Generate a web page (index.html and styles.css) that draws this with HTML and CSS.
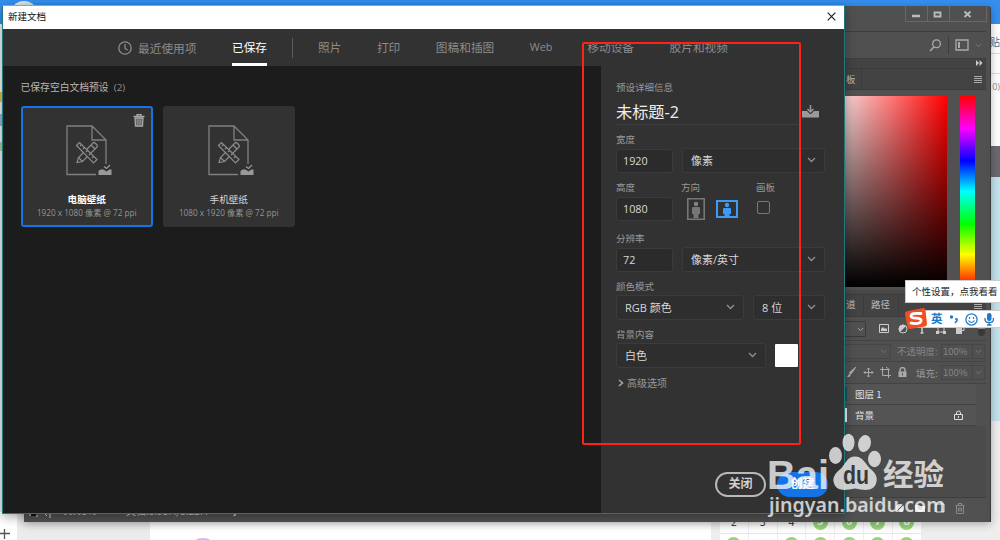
FILE: index.html
```html
<!DOCTYPE html>
<html lang="zh-CN">
<head>
<meta charset="UTF-8">
<meta name="viewport" content="width=device-width, initial-scale=1.0">
<title>新建文档</title>
<link rel="stylesheet" href="styles.css">
</head>
<body>
<div class="desktop">

<!-- Navegador de fondo -->
<div class="browser">
<div class="browser-top"><span class="avatar"></span></div>
<div class="browser-main">
<div class="browser-left"></div>
<div class="browser-right">
<div class="side-link">试贴</div>
<div class="side-line"></div>
<div class="side-count">0)</div>
<div class="side-dark"></div>
<div class="side-blue"></div>
</div>
</div>
<div class="browser-bottom">
<div class="add"><svg width="11" height="11"><path d="M0 5.500h10M4.500 1v10" stroke="#555" stroke-width="1.300"/></svg></div>
<div class="side-gray"></div>
<div class="page-white"><span class="purple"></span></div>
<div class="calendar">
<span>2</span><span>3</span><span>4</span><span><b>5</b></span><span><b>6</b></span><span><b>7</b></span><span><b>8</b></span>
<span><b></b></span><span></span><span><b></b></span><span><b></b></span><span><b></b></span><span><b></b></span><span><b></b></span>
</div>
</div>
</div>

<!-- Ventana del editor -->
<div class="editor">
<div class="status">
<svg class="status-icons" width="24" height="12" viewBox="0 0 24 12"><path d="M2 5h5v4H2z" fill="#111"/><path d="M1 9V4h6M7 9h2M16 6h5v5M18 3l-3 3 3 3" fill="none" stroke="#ddd"/></svg>
<span class="zoom-level">66.68%</span>
<span class="doc-size">文档:5.93M/5.22M</span>
<span class="status-arrow">&#10095;</span>
</div>
<div class="panels">
<div class="window-bar">
<div class="window-buttons">
<span><svg width="10" height="10"><path d="M1 6h8" stroke="#bbb" stroke-width="2.500"/></svg></span>
<span><svg width="10" height="10"><path d="M1.500 2.500h6v4h-6z" fill="none" stroke="#bbb" stroke-width="1.800"/></svg></span>
<span class="wide"><svg width="10" height="10"><path d="M1.500 1.500l6 5.500M7.500 1.500l-6 5.500" stroke="#bbb" stroke-width="1.800"/></svg></span>
</div>
</div>
<div class="options-bar">
<svg width="12" height="13" viewBox="0 0 12 13"><circle cx="7.500" cy="4.800" r="3.900" fill="none" stroke="#aaa" stroke-width="1.300"/><path d="M5 8L1 12" stroke="#aaa" stroke-width="1.600"/></svg>
<i></i>
<svg width="14" height="12" viewBox="0 0 14 12"><path d="M1 1h12v10H1z" fill="none" stroke="#aaa" stroke-width="1.300"/><path d="M3 3h2v6H3z" fill="#aaa"/></svg>
<svg class="down" width="7" height="5" viewBox="0 0 7 5"><path d="M.8 1l2.700 2.700L6.200 1" fill="none" stroke="#777"/></svg>
</div>
<div class="collapse"><svg width="7" height="6"><path d="M0 0l3 3-3 3zM3.500 0l3 3-3 3z" fill="#ccc"/></svg></div>
<div class="tabs-bar">
<span class="tab first">板</span>
<svg width="9" height="7"><path d="M0 .5h8M0 2.500h8M0 4.500h8M0 6.500h8" stroke="#aaa"/></svg>
</div>
<div class="color-panel">
<div class="color-field"></div>
<div class="hue"></div>
</div>
<div class="tabs-bar layers-tabs">
<span class="tab cut">道</span>
<span class="tab on">路径</span>
<svg width="9" height="7"><path d="M0 .5h8M0 2.500h8M0 4.500h8M0 6.500h8" stroke="#aaa"/></svg>
</div>
<div class="filter-row">
<span class="filter-select"><svg width="7" height="5" viewBox="0 0 7 5"><path d="M.8 1l2.700 2.700L6.200 1" fill="none" stroke="#aaa"/></svg></span>
<svg width="10" height="9"><path d="M.5.5h9v8h-9z" fill="none" stroke="#ccc"/><path d="M2 7V5l2-2 2 2 1-1 1 1v2z" fill="#ccc"/></svg>
<svg width="10" height="10"><circle cx="5" cy="5" r="4" fill="none" stroke="#ccc"/><path d="M8 2L2 8a4 4 0 0 1 6-6z" fill="#ccc"/></svg>
<svg width="10" height="10"><path d="M1 3V1h8v2M5 1v8M3.500 9h3" fill="none" stroke="#ccc" stroke-width="1.500"/></svg>
<svg width="10" height="10"><path d="M2 2h6v6H2z" fill="none" stroke="#ccc"/><path d="M0 0h3v3H0zM7 0h3v3H7zM0 7h3v3H0zM7 7h3v3H7z" fill="#ccc"/></svg>
<svg width="10" height="10"><path d="M4 4V.5h5v6H7" fill="none" stroke="#ccc"/><path d="M1 4h6v6H1z" fill="#ccc"/></svg>
<span class="toggle"></span>
</div>
<div class="opacity-row">
<span class="blend-select"><svg width="7" height="5" viewBox="0 0 7 5"><path d="M.8 1l2.700 2.700L6.200 1" fill="none" stroke="#777"/></svg></span>
<label>不透明度:</label>
<span class="percent">100%</span><span class="percent-arrow"><svg width="7" height="5" viewBox="0 0 7 5"><path d="M.8 1l2.700 2.700L6.200 1" fill="none" stroke="#777"/></svg></span>
</div>
<div class="lock-row">
<svg width="11" height="11"><path d="M10 0L5 7 3.500 5.500z" fill="#aaa" stroke="#aaa"/><path d="M4.500 6.500C2 6 3 9 .5 10c3 .5 5-.5 4-3.500z" fill="#aaa"/></svg>
<svg width="11" height="11"><path d="M5.500 1v9M1 5.500h9M4 2.500L5.500 1 7 2.500M4 8.500L5.500 10 7 8.500M2.500 4L1 5.500 2.500 7M8.500 4L10 5.500 8.500 7" fill="none" stroke="#aaa"/></svg>
<svg width="11" height="11"><path d="M2.500 0v8.500H11M0 2.500h8.500V11M6 0l4 3" fill="none" stroke="#aaa"/></svg>
<svg width="11" height="11"><path d="M1.500 4.500h8V10h-8z" fill="#aaa"/><path d="M3 5V3a2.500 2.500 0 0 1 5 0v2" fill="none" stroke="#aaa" stroke-width="1.400"/><path d="M5.500 6v2.500" stroke="#555"/></svg>
<label>填充:</label>
<span class="percent">100%</span><span class="percent-arrow"><svg width="7" height="5" viewBox="0 0 7 5"><path d="M.8 1l2.700 2.700L6.200 1" fill="none" stroke="#777"/></svg></span>
</div>
<div class="layer"><span class="thumb teal"></span>图层 1</div>
<div class="layer"><span class="thumb"></span>背景
<svg width="9" height="11"><path d="M.5 4.500h8v5h-8zM2.500 4.500V3a2 2 0 0 1 4 0v1.500M4.500 6v2" fill="none" stroke="#ddd"/></svg>
</div>
<div class="layers-empty"></div>
<div class="layers-footer">
<svg width="10" height="10"><path d="M1 3h5v4H1zM4 3h5v4H4z" fill="none" stroke="#777"/></svg>
<svg width="10" height="10"><path d="M1 2h8v6H1z" fill="none" stroke="#777"/></svg>
<svg width="10" height="10"><circle cx="5" cy="5" r="4" fill="#ddd"/><path d="M2 8l6-6" stroke="#555"/></svg>
<svg width="10" height="10"><path d="M0 2h4l1 1h5v6H0z" fill="#ddd"/></svg>
<svg width="10" height="10"><path d="M1 1h8v8H1z" fill="none" stroke="#ddd"/></svg>
<svg width="10" height="11"><path d="M.5 2.500h9M3.500 2V.5h3V2M1.500 3v7.500h7V3M3.500 4.500v4M5 4.500v4M6.500 4.500v4" fill="none" stroke="#888"/></svg>
</div>
</div>
</div>

<!-- Dialogo nuevo documento -->
<div class="dialog">
<div class="dialog-title">新建文档
<svg width="9" height="9"><path d="M.7.7l7.600 7.600M8.300.7L.7 8.300" stroke="#222" stroke-width="1.200"/></svg>
</div>
<div class="dialog-nav">
<span class="nav-item recent"><svg width="14" height="14"><circle cx="7" cy="7" r="6.200" fill="none" stroke="#8c8c8c" stroke-width="1.300"/><path d="M7 3v4.200l2.600 2" fill="none" stroke="#8c8c8c" stroke-width="1.300"/></svg>最近使用项</span>
<span class="nav-item active">已保存</span>
<span class="nav-divider"></span>
<span class="nav-item">照片</span>
<span class="nav-item">打印</span>
<span class="nav-item">图稿和插图</span>
<span class="nav-item web">Web</span>
<span class="nav-item">移动设备</span>
<span class="nav-item">胶片和视频</span>
</div>
<div class="dialog-body">
<div class="presets">
<div class="presets-title">已保存空白文档预设&nbsp; <span>(2)</span></div>
<div class="cards">
<div class="card selected">
<svg class="trash" width="12" height="13" viewBox="0 0 12 13"><path d="M.5 2.500h11M4 2V.7h4V2" fill="none" stroke="#a8a8a8" stroke-width="1.300"/><path d="M2 4h8l-.5 8h-7z" fill="#666" stroke="#a8a8a8" stroke-width="1.300"/><path d="M4.500 5.500v5M6 5.500v5M7.500 5.500v5" stroke="#999" stroke-width=".7"/></svg>
<svg class="doc" width="48" height="52" viewBox="0 0 48 52">
<path d="M30 49.500H1V1h25l14 14v24M26 1v14h14" fill="none" stroke="#808080" stroke-width="1.300"/>
<g fill="#323232" stroke="#8c8c8c" stroke-width="1.200">
<path d="M11 37.500l1.500-5L27 18q1-1 2 0l2 2q1 1 0 2L16.500 36.500zM12.500 32.500l4 4M25 20l4 4"/>
<path d="M10.500 20.500l3-3 17.500 17-3.500 3.500zM14 21l1.500-1.500M17 24l1.500-1.500M20 27l1.500-1.500M23 30l1.500-1.500M26 33l1.500-1.500"/>
</g>
<path d="M32.500 46l2-1.500h3l3 2 3-2h2v5.500h-13z" fill="#999"/><path d="M38 41.500l2.500 2L44 40" fill="none" stroke="#999" stroke-width="1.300"/>
</svg>
<div class="card-name">电脑壁纸</div>
<div class="card-size">1920 x 1080 像素 @ 72 ppi</div>
</div>
<div class="card">
<svg class="doc" width="48" height="52" viewBox="0 0 48 52">
<path d="M30 49.500H1V1h25l14 14v24M26 1v14h14" fill="none" stroke="#808080" stroke-width="1.300"/>
<g fill="#323232" stroke="#8c8c8c" stroke-width="1.200">
<path d="M11 37.500l1.500-5L27 18q1-1 2 0l2 2q1 1 0 2L16.500 36.500zM12.500 32.500l4 4M25 20l4 4"/>
<path d="M10.500 20.500l3-3 17.500 17-3.500 3.500zM14 21l1.500-1.500M17 24l1.500-1.500M20 27l1.500-1.500M23 30l1.500-1.500M26 33l1.500-1.500"/>
</g>
<path d="M32.500 46l2-1.500h3l3 2 3-2h2v5.500h-13z" fill="#999"/><path d="M38 41.500l2.500 2L44 40" fill="none" stroke="#999" stroke-width="1.300"/>
</svg>
<div class="card-name">手机壁纸</div>
<div class="card-size">1080 x 1920 像素 @ 72 ppi</div>
</div>
</div>
</div>

<div class="details">
<div class="details-title">预设详细信息</div>
<div class="name-row">
<div class="doc-name">未标题-2</div>
<svg width="17" height="13" viewBox="0 0 17 13"><path d="M0 6h5l3 3h1l3-3h5v6.500H0z" fill="#9a9a9a"/><path d="M8.500 0v6M5.500 4l3 3 3-3" fill="none" stroke="#9a9a9a" stroke-width="1.500"/></svg>
</div>
<div class="label">宽度</div>
<div class="field-row">
<div class="input">1920</div>
<div class="select">像素<svg width="9" height="6"><path d="M1 1l3.500 3.500L8 1" fill="none" stroke="#909090" stroke-width="1.300"/></svg></div>
</div>
<div class="label-row"><span>高度</span><span>方向</span><span>画板</span></div>
<div class="field-row orient-row">
<div class="input">1080</div>
<svg class="portrait" width="18" height="22" viewBox="0 0 18 22"><path d="M.8.800h16.400v20.400H.8z" fill="none" stroke="#777" stroke-width="1.600"/><circle cx="9" cy="6" r="2.200" fill="#858585"/><path d="M5 10q0-1 1-1h6q1 0 1 1v6h-1.500v4h-5v-4H5z" fill="#777"/></svg>
<svg class="landscape" width="22" height="18" viewBox="0 0 22 18"><path d="M1 1h20v16H1z" fill="none" stroke="#3d9bf5" stroke-width="2"/><circle cx="11" cy="5" r="2.200" fill="#3d9bf5"/><path d="M7 9q0-1 1-1h6q1 0 1 1v5h-1.500v3h-5v-3H7z" fill="#3d9bf5"/></svg>
<span class="checkbox"></span>
</div>
<div class="label res-label">分辨率</div>
<div class="field-row">
<div class="input">72</div>
<div class="select">像素/英寸<svg width="9" height="6"><path d="M1 1l3.500 3.500L8 1" fill="none" stroke="#909090" stroke-width="1.300"/></svg></div>
</div>
<div class="label">颜色模式</div>
<div class="field-row">
<div class="select mode">RGB 颜色<svg width="9" height="6"><path d="M1 1l3.500 3.500L8 1" fill="none" stroke="#909090" stroke-width="1.300"/></svg></div>
<div class="select">8 位<svg width="9" height="6"><path d="M1 1l3.500 3.500L8 1" fill="none" stroke="#909090" stroke-width="1.300"/></svg></div>
</div>
<div class="label">背景内容</div>
<div class="field-row">
<div class="select background">白色<svg width="9" height="6"><path d="M1 1l3.500 3.500L8 1" fill="none" stroke="#909090" stroke-width="1.300"/></svg></div>
<span class="swatch"></span>
</div>
<div class="advanced"><svg width="6" height="8"><path d="M1 1l3.500 3L1 7" fill="none" stroke="#aaa" stroke-width="1.500"/></svg>高级选项</div>
<div class="actions">
<span class="btn">关闭</span>
<span class="btn primary">创建</span>
</div>
</div>
</div>
</div>

<!-- Barra del teclado -->
<div class="ime-tip">个性设置，点我看看</div>
<div class="ime-bar">
<span class="ime-lang">英</span>
<svg width="10" height="10"><circle cx="2.500" cy="3" r="1.700" fill="#2079c8"/><path d="M6 5h2v1.500L6 9" fill="none" stroke="#2079c8" stroke-width="1.600"/></svg>
<svg width="13" height="13"><circle cx="6.500" cy="6.500" r="5.600" fill="none" stroke="#2079c8" stroke-width="1.300"/><path d="M4.500 4v2M8.500 4v2M3.500 7.500q3 4 6 0" fill="none" stroke="#2079c8" stroke-width="1.200"/></svg>
<svg width="10" height="13"><rect x="3" y="0" width="4.500" height="8" rx="2.200" fill="#2079c8"/><path d="M1 5v1.500q0 3 4.200 3t4.200-3V5M5.200 9.500V12M3 12h4.500" fill="none" stroke="#2079c8" stroke-width="1.300"/></svg>
</div>
<svg class="sogou" width="24" height="23" viewBox="0 0 24 23"><path d="M2 4.500L19 1q2 0 2.500 2L23 17q0 2-2 2.500L6 22q-2 0-2.500-2L1 7q0-2 1-2.500z" fill="#ee5024"/><path d="M17 6.500Q7 5.500 7 9q0 2 5 2.200 6 .3 5 3-1.500 3.500-10 2" fill="none" stroke="#fff" stroke-width="2.800" stroke-linecap="round"/></svg>

<div class="highlight"></div>

<svg class="watermark" width="190" height="95" viewBox="764 430 190 95">
<g fill="#fff">
<text class="wm-bai" x="767" y="489" textLength="62" lengthAdjust="spacingAndGlyphs">Bai</text>
<ellipse cx="835.500" cy="455.500" rx="6.500" ry="8.500"/>
<ellipse cx="848.500" cy="442.500" rx="6" ry="8.700"/>
<ellipse cx="864.500" cy="443.500" rx="6.300" ry="8.500" transform="rotate(15 864.500 443.500)"/>
<ellipse cx="874.500" cy="459" rx="6.500" ry="8.300"/>
<path d="M855 456.500c-8 0-9 7-14 12-6 5-9 9-7 15 3 8 11 7 21 5 10 2 18 3 21-5 2-6 0-10-6-15-5-5-7-12-15-12z"/>
<text class="wm-cn" x="883" y="485" textLength="61" lengthAdjust="spacingAndGlyphs">经验</text>
</g>
<text class="wm-du" x="843" y="484" textLength="26" lengthAdjust="spacingAndGlyphs">du</text>
<text class="wm-url" x="769" y="512" textLength="176" lengthAdjust="spacingAndGlyphs">jingyan.baidu.com</text>
</svg>
</div>
</body>
</html>
```
FILE: styles.css
```css
* {
    box-sizing: border-box;
}

body {
    margin: 0;
    font-family: "Open Sans", "Noto Sans CJK SC", sans-serif;
}

svg {
    display: block;
    flex-shrink: 0;
}

.desktop {
    position: relative;
    width: 1000px;
    height: 540px;
    overflow: hidden;
    background: #fff;
}

/* Navegador */
.browser {
    height: 540px;
    display: flex;
    flex-direction: column;
}

.browser-top {
    height: 24px;
    background: #348ff0;
    overflow: hidden;
    flex-shrink: 0;
}

.avatar {
    display: block;
    width: 28px;
    height: 28px;
    margin: 1px 0 0 10px;
    border-radius: 50%;
    background: #dce6ee;
}

.browser-main {
    height: 488px;
    display: flex;
    justify-content: space-between;
}

.browser-left {
    width: 20px;
    background: linear-gradient(#f2f2f2 0 68px, #e5b94d 68px 78px, #eee 78px 90px, #8fb8d8 90px 102px, #eee 102px 118px, #a9cfa4 118px 127px, #ededed 127px);
}

.browser-right {
    width: 9px;
    overflow: hidden;
    background: #eee;
}

.side-link,
.side-count {
    display: flex;
    align-items: center;
    justify-content: flex-end;
    width: 9px;
    background: #fff;
    white-space: nowrap;
}

.side-link {
    height: 29px;
    padding-top: 6px;
    font-size: 10px;
    color: #4c6c8c;
}

.side-line {
    height: 21px;
    background: #fff;
    border-top: 1px solid #ddd;
    border-bottom: 1px solid #ddd;
}

.side-count {
    height: 72px;
    padding-bottom: 48px;
    font-size: 9px;
    color: #888;
}

.side-dark {
    height: 31px;
    background: #69696f;
}

.side-blue {
    height: 244px;
    background: #c4e2ed;
}

.browser-bottom {
    height: 28px;
    display: flex;
    background: #eee;
}

.add {
    width: 17px;
    padding-top: 16px;
    background: #fff;
}

.side-gray {
    width: 133px;
    background: #ebebeb;
}

.page-white {
    width: 561px;
    background: #fff;
    overflow: hidden;
}

.purple {
    display: block;
    width: 26px;
    height: 20px;
    margin: 26px 0 0 40px;
    border-radius: 50%;
    background: #d5b3f5;
}

.calendar {
    width: 202px;
    height: 44px;
    margin-left: 9px;
    display: grid;
    grid-template-columns: repeat(7, 28.800px);
    grid-template-rows: 22px 22px;
    background: #fff;
    font: 10px/14px "DejaVu Sans", sans-serif;
    color: #444;
}

.calendar span {
    display: flex;
    align-items: center;
    justify-content: center;
    border-right: 1px solid #eee;
    border-bottom: 1px solid #e5e5e5;
}

.calendar b {
    width: 15px;
    height: 15px;
    border-radius: 50%;
    background: #98d67c;
    color: #fff;
    text-align: center;
}

/* Editor */
.editor {
    position: absolute;
    left: 24px;
    top: 6px;
    width: 967px;
    height: 516px;
    display: flex;
    justify-content: space-between;
    align-items: flex-end;
    background: #505050;
    border-radius: 0 4px 0 0;
    box-shadow: 0 2px 9px rgba(0, 0, 0, 0.3);
    font-family: "Noto Sans CJK SC", sans-serif;
}

.status {
    display: flex;
    align-items: center;
    height: 18px;
    padding: 0 0 4px 5px;
    font-size: 10px;
    line-height: 14px;
    color: #ccc;
}

.status-icons {
    margin-top: 4px;
}

.zoom-level {
    margin-left: 9px;
    width: 64px;
}

.doc-size {
    width: 106px;
}

.status-arrow {
    font-size: 8px;
}

.panels {
    width: 147px;
    height: 516px;
    padding-right: 4px;
    border-right: 1px solid #3b3b3b;
    border-radius: 0 4px 0 0;
    display: flex;
    flex-direction: column;
    color: #bbb;
    font-size: 9.500px;
}

.window-bar {
    height: 26px;
    border-bottom: 1px solid #3e3e3e;
    display: flex;
    justify-content: flex-end;
    flex-shrink: 0;
}

.window-buttons {
    display: flex;
    height: 16px;
    margin-right: -1px;
    border: 1px solid #686868;
    border-top: 0;
}

.window-buttons span {
    width: 22px;
    padding: 4px 0 0 5px;
    border-right: 1px solid #686868;
}

.window-buttons .wide {
    width: 36px;
    padding-left: 13px;
    border-right: 0;
}

.options-bar {
    height: 27px;
    display: flex;
    align-items: center;
    justify-content: flex-end;
    border-bottom: 1px solid #3e3e3e;
    flex-shrink: 0;
}

.options-bar i {
    width: 1px;
    height: 18px;
    margin: 0 6px 0 7px;
    background: #3e3e3e;
}

.options-bar .down {
    margin: 0 4px 0 6px;
}

.collapse {
    height: 9px;
    padding: 1px 3px 0 0;
    display: flex;
    justify-content: flex-end;
    background: #434343;
    flex-shrink: 0;
}

.tabs-bar {
    height: 22px;
    display: flex;
    align-items: center;
    justify-content: space-between;
    padding-right: 3px;
    background: #434343;
    border-top: 1px solid #3b3b3b;
    border-bottom: 1px solid #3b3b3b;
    flex-shrink: 0;
}

.tab {
    height: 20px;
    line-height: 20px;
    color: #bbb;
    border-right: 1px solid #3b3b3b;
}

.first {
    width: 18px;
    padding-left: 2px;
}

.color-panel {
    height: 204px;
    display: flex;
    gap: 13px;
    padding-top: 6px;
    flex-shrink: 0;
    background: #515151;
    border-bottom: 4px solid #484848;
}

.color-field {
    width: 103px;
    height: 191px;
    background: linear-gradient(to top, #000, rgba(0, 0, 0, 0)), linear-gradient(to right, #f2d5d5, #ff8080 42%, #f00);
}

.hue {
    width: 15px;
    height: 191px;
    background: linear-gradient(#f00, #f0f 17%, #00f 34%, #0ff 50%, #0f0 67%, #ff0 83%, #f00);
}

.layers-tabs {
    height: 23px;
    justify-content: flex-start;
}

.layers-tabs .tab {
    line-height: 17px;
}

.layers-tabs svg {
    margin-left: auto;
}

.cut {
    width: 20px;
    padding-left: 2px;
}

.on {
    width: 35px;
    padding-left: 7px;
}

.filter-row,
.opacity-row,
.lock-row {
    display: flex;
    align-items: center;
    border-bottom: 1px solid #434343;
    flex-shrink: 0;
}

.filter-row {
    height: 24px;
    gap: 9px;
}

.filter-select {
    width: 22px;
    height: 16px;
    margin-right: 4px;
    padding: 5px 0 0 13px;
    border: 1px solid #393939;
    border-left: 0;
    border-radius: 0 2px 2px 0;
}

.toggle {
    width: 7px;
    height: 14px;
    margin-left: 4px;
    border-radius: 4px;
    background: linear-gradient(#888 50%, #383838 50%);
}

.opacity-row {
    height: 21px;
    color: #858585;
}

.blend-select {
    width: 47px;
    height: 15px;
    margin-right: 6px;
    padding: 4px 0 0 36px;
    border: 1px solid #464646;
    border-left: 0;
}

.opacity-row label {
    width: 44px;
    white-space: nowrap;
}

.percent {
    width: 32px;
    height: 15px;
    border: 1px solid #464646;
    line-height: 13px;
    padding-left: 1px;
    color: #858585;
}

.percent-arrow {
    width: 12px;
    height: 15px;
    border: 1px solid #464646;
    border-left: 0;
    padding: 4px 0 0 2px;
}

.lock-row {
    height: 22px;
    padding-left: 2px;
    gap: 6px;
    color: #999;
}

.lock-row label {
    width: 24px;
    margin-left: 2px;
    white-space: nowrap;
}

.lock-row .percent {
    width: 32px;
    margin-left: -5px;
}

.lock-row .percent-arrow {
    margin-left: -6px;
}

.layer {
    width: 132px;
    height: 21px;
    display: flex;
    align-items: center;
    background: #545454;
    border-bottom: 1px solid #434343;
    color: #e2e2e2;
    flex-shrink: 0;
}

.layer svg {
    margin: 0 13px 0 auto;
}

.thumb {
    width: 3px;
    height: 14px;
    margin-right: 8px;
    background: #eee;
}

.thumb.teal {
    background: #13555c;
}

.layers-empty {
    flex: 1;
    background: #4b4b4b;
    border-bottom: 1px solid #3e3e3e;
}

.layers-footer {
    height: 24px;
    display: flex;
    gap: 10px;
    justify-content: flex-end;
    padding: 5px 21px 0 0;
    background: #515151;
    flex-shrink: 0;
}

/* Dialogo */
.dialog {
    position: absolute;
    left: 2px;
    top: 5px;
    width: 843px;
    height: 509px;
    border: 1px solid #20797c;
    border-top-color: #53bdd8;
    background: #1c1c1c;
    box-shadow: 0 3px 10px rgba(0, 0, 0, 0.35);
    display: flex;
    flex-direction: column;
}

.dialog-title {
    height: 23px;
    display: flex;
    align-items: center;
    justify-content: space-between;
    padding: 0 8px 3px 5px;
    background: #fff;
    color: #111;
    font-size: 9.500px;
    flex-shrink: 0;
}

.dialog-nav {
    height: 37px;
    display: flex;
    align-items: center;
    gap: 35.500px;
    padding-left: 115px;
    background: #323232;
    color: #8c8c8c;
    font-size: 11.700px;
    white-space: nowrap;
    flex-shrink: 0;
}

.nav-item {
    height: 37px;
    line-height: 36px;
}

.recent {
    display: flex;
    align-items: center;
    gap: 6px;
}

.active {
    color: #fff;
    border-bottom: 3px solid #fff;
}

.web {
    width: 22px;
    font-size: 10.800px;
}

.nav-divider {
    width: 1px;
    height: 20px;
    margin: 0 -10px 0 -11px;
    background: #5c5c5c;
}

.dialog-body {
    flex: 1;
    display: flex;
}

.presets {
    width: 598px;
    padding: 13px 0 0 17.500px;
}

.presets-title {
    height: 27px;
    line-height: 17px;
    font-size: 9.800px;
    color: #b8b8b8;
}

.presets-title span {
    color: #909090;
}

.cards {
    display: flex;
    gap: 9.500px;
}

.card {
    position: relative;
    width: 132.500px;
    height: 121px;
    padding-top: 19px;
    background: #323232;
    border-radius: 3px;
    text-align: center;
    white-space: nowrap;
}

.selected {
    padding-top: 17px;
    border: 2px solid #1473e6;
}

.doc {
    margin: 0 auto 16px;
    padding-left: 0;
    transform: translateX(3px);
}

.trash {
    position: absolute;
    right: 6px;
    top: 6px;
}

.card-name {
    font-size: 9.600px;
    line-height: 14px;
    color: #d5d5d5;
}

.selected .card-name {
    color: #fff;
    font-weight: bold;
}

.card-size {
    font-size: 8.200px;
    line-height: 11px;
    color: #959595;
}

.details {
    width: 243px;
    display: flex;
    flex-direction: column;
    padding: 13px 0 16px 15px;
    background: #323232;
    color: #d8d8d8;
    font-size: 11px;
}

.details-title {
    height: 18px;
    line-height: 18px;
    font-size: 9.500px;
    color: #999;
}

.name-row {
    display: flex;
    align-items: center;
    gap: 4px;
    height: 28px;
}

.doc-name {
    width: 182px;
    height: 28px;
    line-height: 30px;
    font-size: 16.200px;
    color: #eee;
    border-bottom: 1px solid #404040;
}

.label,
.label-row {
    height: 23px;
    padding-top: 6px;
    line-height: 17px;
    font-size: 9.500px;
    color: #999;
}

.label-row {
    display: grid;
    grid-template-columns: 65px 75px 60px;
}

.res-label {
    margin-top: 3px;
}

.field-row {
    display: flex;
    align-items: center;
    gap: 9px;
    width: 208.500px;
    height: 25px;
}

.input {
    width: 57px;
    height: 24px;
    padding-left: 6px;
    line-height: 22px;
    font-size: 10.800px;
    background: #2b2b2b;
    border: 1px solid #3b3b3b;
    border-radius: 3px;
}

.select {
    flex: 1;
    height: 25px;
    display: flex;
    align-items: center;
    justify-content: space-between;
    padding: 0 8px 2px;
    background: #2e2e2e;
    border: 1px solid #3b3b3b;
    border-radius: 3px;
}

.orient-row {
    gap: 0;
}

.portrait {
    margin-left: 14px;
}

.landscape {
    margin-left: 11px;
}

.checkbox {
    width: 13px;
    height: 13px;
    margin: 0 0 2px 19px;
    border: 1.500px solid #787878;
    border-radius: 2px;
}

.mode {
    flex: 0 0 128px;
}

.background {
    flex: 0 0 150px;
}

.swatch {
    width: 23px;
    height: 23px;
    background: #fff;
    border-radius: 1px;
}

.advanced {
    display: flex;
    align-items: center;
    gap: 3px;
    height: 29px;
    padding-left: 2px;
    font-size: 10px;
    color: #999;
}

.actions {
    display: flex;
    gap: 11px;
    margin-top: auto;
    padding-left: 99px;
}

.btn {
    width: 51px;
    height: 25px;
    border: 2px solid #b8b8b8;
    border-radius: 13px;
    text-align: center;
    line-height: 20px;
    font-size: 12px;
    font-weight: bold;
    color: #d0d0d0;
}

.primary {
    border-color: #1473e6;
    background: #1473e6;
    color: #fff;
}

/* Teclado */
.ime-tip {
    position: absolute;
    left: 905px;
    top: 280px;
    width: 105px;
    height: 23px;
    padding-left: 6px;
    background: #fff;
    border: 1px solid #ccc;
    color: #222;
    font-size: 9.500px;
    line-height: 21px;
    white-space: nowrap;
}

.ime-bar {
    position: absolute;
    left: 915px;
    top: 310px;
    width: 90px;
    height: 18px;
    display: flex;
    align-items: center;
    gap: 6px;
    padding-left: 15px;
    background: #fff;
    border: 1px solid #ccc;
}

.ime-lang {
    font-size: 11.500px;
    line-height: 16px;
    font-weight: bold;
    color: #2079c8;
}

.sogou {
    position: absolute;
    left: 904px;
    top: 307px;
}

.highlight {
    position: absolute;
    left: 582px;
    top: 42px;
    width: 219px;
    height: 403px;
    border: 2px solid #ff2317;
    border-radius: 2px;
}

/* Marca de agua */
.watermark {
    position: absolute;
    left: 764px;
    top: 430px;
    opacity: 0.74;
}

.wm-bai {
    font: bold 41px "Liberation Sans", sans-serif;
}

.wm-cn {
    font: bold 30px "Noto Sans CJK SC", sans-serif;
}

.wm-du {
    font: bold 25px "Liberation Sans", sans-serif;
    fill: #333;
}

.wm-url {
    font: 600 20px "Noto Sans", sans-serif;
    fill: #fff;
}
```
